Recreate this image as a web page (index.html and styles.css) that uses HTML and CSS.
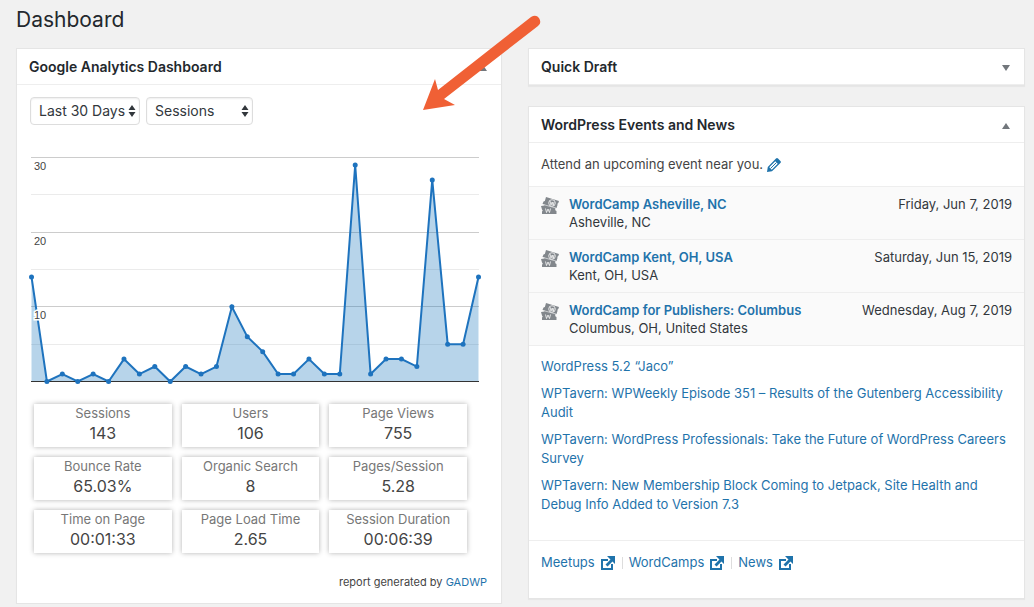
FILE: index.html
```html
<!DOCTYPE html>
<html lang="en">
<head>
<meta charset="utf-8">
<meta name="viewport" content="width=device-width, initial-scale=1">
<title>Dashboard</title>
<link rel="stylesheet" href="styles.css">
</head>
<body>
<svg class="sprite" aria-hidden="true">
  <symbol id="i-updown" viewBox="0 0 8 12"><path d="M4 0 7.500 5h-7zM4 12 .5 7h7z"/></symbol>
  <symbol id="i-external" viewBox="0 0 14 14"><path d="M0 3h7v2H2v7h8V8h2v6H0z"/><path d="M6 0h8v8l-2.500-2.500-5 5-2-2 5-5z"/></symbol>
  <symbol id="i-ticket" viewBox="0 0 18 18">
    <path d="M5 0 18 4l-.7 2q-1.300.5-.8 2l-1 3-1.500.5.5 2 1 .5v3H1v-2.500q1.500-.5 0-2L0 9l3.500-.5.5-1-2.500-.5 1-2.500q1.800 0 1.800-2z"/>
    <path d="m4 8 11 3" stroke="#fafafa" stroke-width=".6"/>
    <g fill="none" stroke="#fafafa" stroke-width=".8"><circle cx="11" cy="6" r="3.300"/><path d="m9 4 1 4 1.200-3 1 3.500L13 5M4.500 11.500l1 4L7 12l1.500 3.500 1-4"/></g>
  </symbol>
</svg>
<main class="page">
  <h1 class="page-title">Dashboard</h1>
  <div class="columns">
    <section class="panel">
      <header class="panel-head"><h2>Google Analytics Dashboard</h2><button class="toggle toggle-up" type="button" aria-label="Toggle Google Analytics Dashboard"></button></header>
      <div class="analytics">
        <form class="filters">
          <span class="select"><select aria-label="Period"><option>Last 30 Days</option></select><svg><use href="#i-updown"/></svg></span>
          <span class="select"><select aria-label="Metric"><option>Sessions</option></select><svg><use href="#i-updown"/></svg></span>
        </form>
        <svg class="chart" viewBox="0 0 457 234" role="img" aria-label="Sessions over the last 30 days"></svg>
        <dl class="stats">
          <div><dt>Sessions</dt><dd>143</dd></div>
          <div><dt>Users</dt><dd>106</dd></div>
          <div><dt>Page Views</dt><dd>755</dd></div>
          <div><dt>Bounce Rate</dt><dd>65.03%</dd></div>
          <div><dt>Organic Search</dt><dd>8</dd></div>
          <div><dt>Pages/Session</dt><dd>5.28</dd></div>
          <div><dt>Time on Page</dt><dd>00:01:33</dd></div>
          <div><dt>Page Load Time</dt><dd>2.65</dd></div>
          <div><dt>Session Duration</dt><dd>00:06:39</dd></div>
        </dl>
        <p class="credit">report generated by <a href="#">GADWP</a></p>
      </div>
    </section>
    <div class="side">
      <section class="panel">
        <header class="panel-head"><h2>Quick Draft</h2><button class="toggle" type="button" aria-label="Toggle Quick Draft"></button></header>
      </section>
      <section class="panel">
        <header class="panel-head"><h2>WordPress Events and News</h2><button class="toggle toggle-up" type="button" aria-label="Toggle WordPress Events and News"></button></header>
        <div class="intro">Attend an upcoming event near you.
          <button class="edit" type="button" aria-label="Edit city"><svg viewBox="0 0 14 14"><path d="m9 .6q1-1 2 0l2.400 2.400q1 1 0 2L5 13.200l-5 .8.800-5z"/><path d="m2.300 9.300 6-6 2.400 2.400-6 6z" fill="#fff"/><path d="m3.500 10.500 6-6" stroke="#1f73ab"/></svg></button>
        </div>
        <ul class="events">
          <li><svg class="ticket"><use href="#i-ticket"/></svg><div><a href="#">WordCamp Asheville, NC</a><span>Asheville, NC</span></div><time>Friday, Jun 7, 2019</time></li>
          <li><svg class="ticket"><use href="#i-ticket"/></svg><div><a href="#">WordCamp Kent, OH, USA</a><span>Kent, OH, USA</span></div><time>Saturday, Jun 15, 2019</time></li>
          <li><svg class="ticket"><use href="#i-ticket"/></svg><div><a href="#">WordCamp for Publishers: Columbus</a><span>Columbus, OH, United States</span></div><time>Wednesday, Aug 7, 2019</time></li>
        </ul>
        <ul class="news">
          <li><a href="#">WordPress 5.2 “Jaco”</a></li>
          <li><a href="#">WPTavern: WPWeekly Episode 351 – Results of the Gutenberg Accessibility Audit</a></li>
          <li><a href="#">WPTavern: WordPress Professionals: Take the Future of WordPress Careers Survey</a></li>
          <li><a href="#">WPTavern: New Membership Block Coming to Jetpack, Site Health and Debug Info Added to Version 7.3</a></li>
        </ul>
        <footer class="links">
          <a href="#">Meetups <svg><use href="#i-external"/></svg></a>
          <a href="#">WordCamps <svg><use href="#i-external"/></svg></a>
          <a href="#">News <svg><use href="#i-external"/></svg></a>
        </footer>
      </section>
    </div>
  </div>
  <svg class="pointer" viewBox="0 0 120 98" aria-hidden="true"><path d="M2 96 14 65l3 11L110 3q5-3 8 1 3 5-1 8L23 85l11 6z"/></svg>
</main>
<script src="chart.js"></script>
</body>
</html>
```
FILE: styles.css
```css
* { box-sizing: border-box; }
body { margin: 0; background: #f1f1f1; color: #32373c; font: 13px/19px Inter, "Liberation Sans", sans-serif; }
a { color: #1f73ab; text-decoration: none; }
h1, h2, p, ul, dl, dd { margin: 0; padding: 0; }
ul { list-style: none; }
button { border: 0; padding: 0; background: none; cursor: pointer; }
.sprite { position: absolute; width: 0; height: 0; }
.page { position: relative; padding: 4px 9px 0 16px; }
.page-title { font-size: 21px; line-height: 32px; font-weight: 400; color: #23282d; }
.columns { display: grid; grid-template-columns: 486fr 497fr; gap: 26px; align-items: start; margin-top: 12px; }
.side { display: grid; gap: 20px; }
.panel { min-width: 0; background: #fff; border: 1px solid #e5e5e5; box-shadow: 0 1px 1px rgba(0, 0, 0, .04); }
.panel-head { display: flex; align-items: center; justify-content: space-between; height: 36px; padding: 0 12px; border-bottom: 1px solid #eee; }
.panel-head h2 { font-size: 14px; line-height: 20px; font-weight: 600; color: #23282d; }
.toggle { width: 12px; height: 16px; display: grid; place-items: end center; }
.toggle::before { content: ""; margin-bottom: 4px; border: 4px solid transparent; border-top: 6px solid #72777c; border-bottom: 0; }
.toggle-up::before { border-top: 0; border-bottom: 6px solid #72777c; }

.analytics { padding: 12px 14px 11px 13px; }
.filters { display: flex; gap: 6px; }
.select { position: relative; width: 110px; }
.select + .select { width: 107px; }
.select select { display: block; width: 100%; height: 28px; padding: 0 8px 1px; border: 1px solid #ddd; border-radius: 4px; background: #fff; box-shadow: inset 0 1px 2px rgba(0, 0, 0, .07); color: #32373c; font: inherit; font-size: 14px; appearance: none; }
.select svg { position: absolute; right: 4px; top: 8px; width: 8px; height: 12px; fill: #32373c; pointer-events: none; }
.chart { display: block; width: 100%; margin-top: 28px; overflow: visible; }
.chart text { font: 11px "Liberation Sans", sans-serif; fill: #444; stroke: #fff; stroke-width: 3px; paint-order: stroke; }
.major { stroke: #ccc; }
.minor { stroke: #ebebeb; }
.base { stroke: #333; }
.area { fill: #1171b8; fill-opacity: .3; }
.line { fill: none; stroke: #1e73be; stroke-width: 2; }
.dot { fill: #1e73be; }
.stats { display: grid; grid-template-columns: repeat(3, 1fr); gap: 10px; margin: 17px 20px 0 4px; text-align: center; }
.stats div { height: 43px; background: #fff; box-shadow: 0 0 5px rgba(0, 0, 0, .3); }
.stats dt { line-height: 19px; color: #777; }
.stats dd { font-size: 16px; line-height: 20px; color: #444; }
.credit { margin-top: 20px; font-size: 11px; text-align: right; color: #444; }

.intro { display: flex; align-items: center; gap: 4px; height: 43px; padding: 0 12px; color: #444; }
.edit { display: grid; }
.edit svg { width: 14px; height: 14px; fill: #1f73ab; }
.events { background: #fafafa; border-bottom: 1px solid #eee; }
.events li { display: flex; height: 53px; padding: 8px 12px; line-height: 18px; border-top: 1px solid #eee; }
.events div { flex: 1; }
.events a { display: block; font-weight: 600; }
.events span { display: block; }
.ticket { width: 18px; height: 18px; margin: 2px 10px 0 0; fill: #82878c; }
.news { display: grid; gap: 8px; padding: 11px 12px 26px; }
.links { display: flex; height: 58px; padding: 12px 12px 0; border-top: 1px solid #eee; }
.links a { display: flex; align-items: center; gap: 6px; height: 19px; }
.links a + a { margin-left: 7px; }
.links a + a::before { content: ""; width: 1px; height: 12px; background: #ddd; }
.links svg { width: 14px; height: 14px; fill: #1f73ab; }
.pointer { position: absolute; left: 421px; top: 14px; width: 120px; height: 98px; fill: #f06035; pointer-events: none; }
```
FILE: chart.js
```js
const sessions = [14, 0, 1, 0, 1, 0, 3, 1, 2, 0, 2, 1, 2, 10, 6, 4, 1, 1, 3, 1, 1, 29, 1, 3, 3, 2, 27, 5, 5, 14];
const left = 1.5, right = 448.5, ceiling = 4.5, bottom = 228.5;
const x = i => left + i * (right - left) / (sessions.length - 1);
const y = v => bottom - v * (bottom - ceiling) / 30;
const points = sessions.map((v, i) => `${x(i)},${y(v)}`).join(" ");
const rule = (v, name) => {
  const at = Math.floor(y(v)) + 0.5;
  return `<line class="${name}" x1="1" x2="449" y1="${at}" y2="${at}"/>`;
};
document.querySelector(".chart").innerHTML =
  [5, 15, 25].map(v => rule(v, "minor")).join("") +
  [10, 20, 30].map(v => rule(v, "major")).join("") +
  `<polygon class="area" points="${left},${bottom} ${points} ${right},${bottom}"/>` +
  rule(0, "base") +
  `<polyline class="line" points="${points}"/>` +
  sessions.map((v, i) => `<circle class="dot" cx="${x(i)}" cy="${y(v)}" r="2.5"/>`).join("") +
  [10, 20, 30].map(v => `<text x="4" y="${Math.floor(y(v)) + 13}">${v}</text>`).join("");
```
